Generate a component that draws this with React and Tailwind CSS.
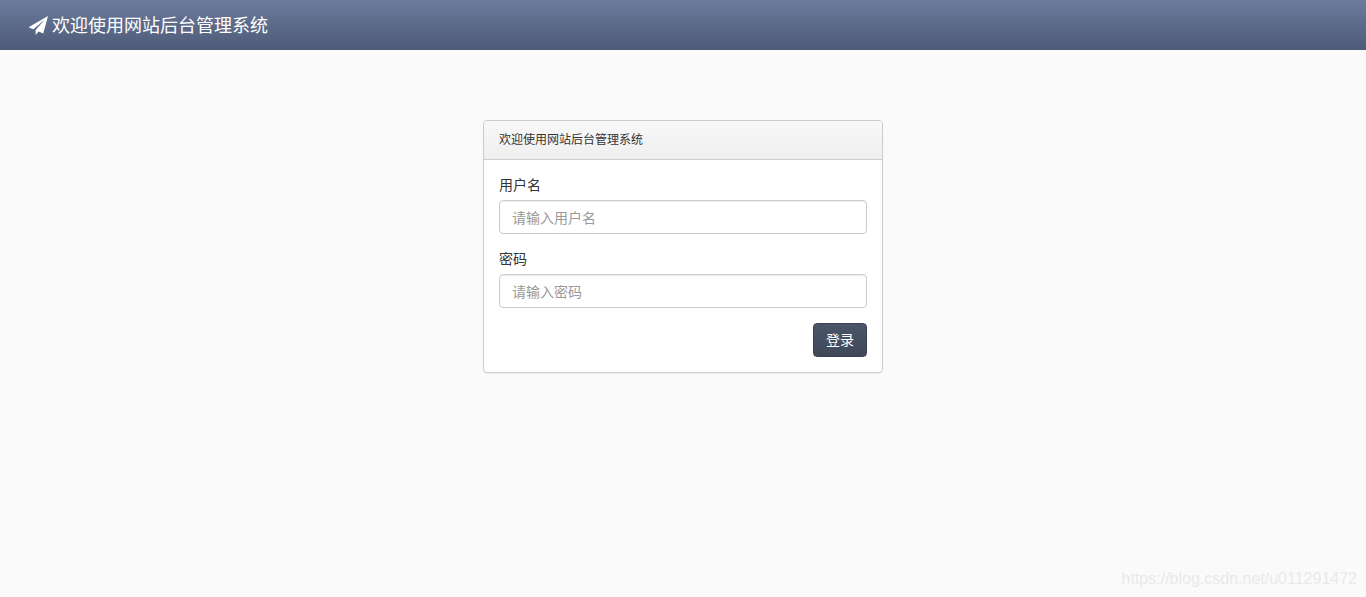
import React from 'react';

const cjk = { fontFamily: '"Liberation Sans", "Noto Sans CJK SC", sans-serif' };

const PaperPlane = () => (
  <svg viewBox="0 0 512 512" className="w-[19px] h-[19px] fill-white shrink-0">
    <path d="M512 0L-10 304l128 52L430 92 178 380v132l80-92 126 54z" />
  </svg>
);

const Field = ({ label, placeholder, type = 'text' }) => (
  <div className="mb-[15px]">
    <label className="block text-[14px] leading-[20px] text-[#333] mb-[5px]">{label}</label>
    <input
      type={type}
      placeholder={placeholder}
      className="block w-full h-[34px] px-[12px] pt-[2px] text-[14px] bg-white border border-[#ccc] rounded-[4px] shadow-[inset_0_1px_1px_rgba(0,0,0,0.075)] outline-none placeholder:text-[#999]"
      style={cjk}
    />
  </div>
);

export default function App() {
  return (
    <div className="relative min-h-[597px] bg-[#fafafa]" style={cjk}>
      <header className="h-[50px] flex items-center gap-[4px] pl-[29px] bg-gradient-to-b from-[#6c7b9d] to-[#4e5b78]">
        <PaperPlane />
        <span className="text-[18px] text-white pt-[2px]">欢迎使用网站后台管理系统</span>
      </header>

      <main className="flex justify-center pt-[70px]">
        <div className="w-[400px] h-[253px] bg-white border border-[#ccc] rounded-[4px] shadow-[0_1px_1px_rgba(0,0,0,0.05)] overflow-hidden">
          <div className="h-[39px] flex items-center px-[15px] text-[12px] text-[#333] bg-gradient-to-b from-[#f8f8f8] to-[#efefef] border-b border-[#ccc]">
            欢迎使用网站后台管理系统
          </div>
          <form className="px-[15px] pt-[15px]">
            <Field label="用户名" placeholder="请输入用户名" />
            <Field label="密码" placeholder="请输入密码" type="password" />
            <div className="flex justify-end">
              <button
                type="button"
                className="w-[54px] h-[34px] text-[14px] text-white rounded-[4px] border border-[#3a4252] bg-gradient-to-b from-[#4b5568] to-[#3f4859]"
                style={cjk}
              >
                登录
              </button>
            </div>
          </form>
        </div>
      </main>

      <span className="absolute right-[9px] bottom-[8px] text-[16px] leading-[20px] text-[#e9e9e9]">
        https://blog.csdn.net/u011291472
      </span>
    </div>
  );
}
